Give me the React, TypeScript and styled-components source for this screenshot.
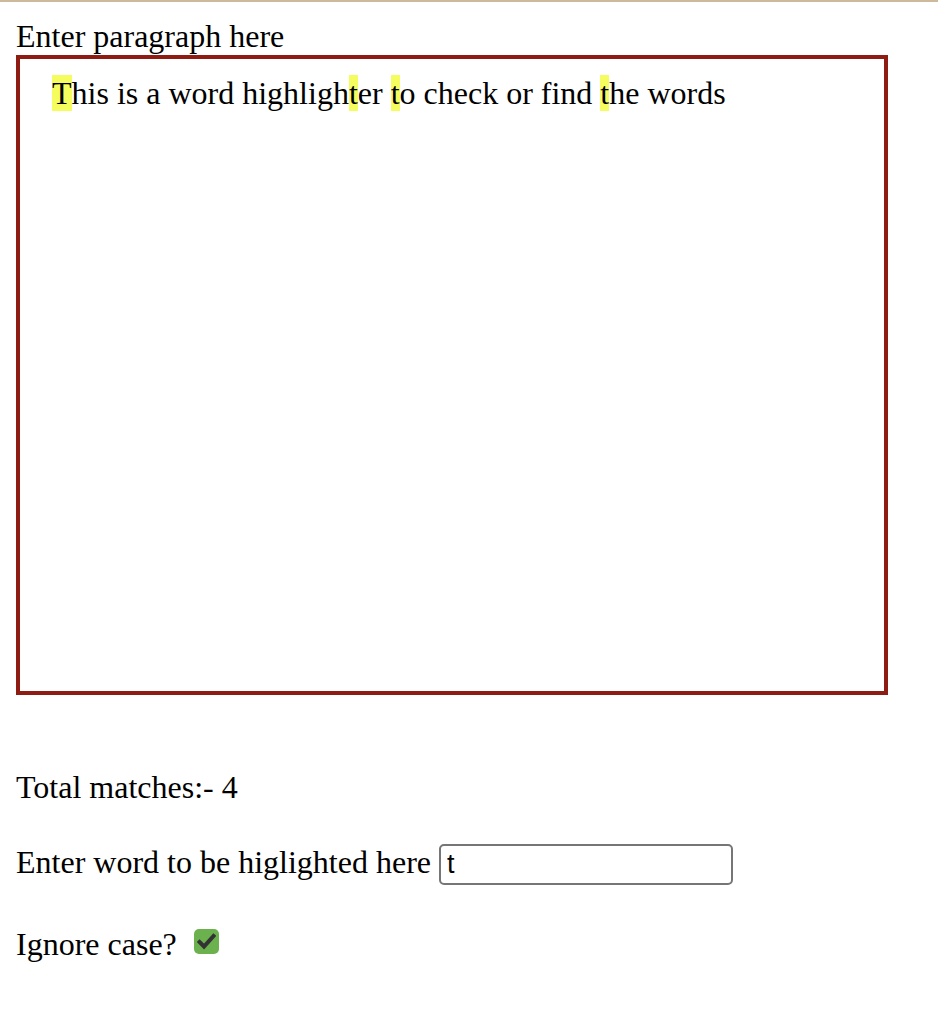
import React from "react";
import styled, { createGlobalStyle } from "styled-components";

const Global = createGlobalStyle`
  html {
    border-top: 2px solid #cdb99c;
    background: #ffffff;
  }
  body {
    margin: 16px;
    font-family: "Liberation Serif", "Times New Roman", serif;
    font-size: 32px;
    color: #000000;
  }
`;

const Page = styled.div`
  display: flex;
  flex-direction: column;
  align-items: flex-start;
`;

const Label = styled.div`
  line-height: normal;
`;

const Editor = styled.div`
  box-sizing: border-box;
  width: 872px;
  height: 640px;
  border: 4px solid #8e1c12;
  padding: 16px 32px;
  line-height: normal;
  outline: none;
`;

const Mark = styled.span`
  background: #f5fd5e;
`;

const Row = styled.div<{ $top: number }>`
  margin-top: ${(p) => p.$top}px;
  line-height: normal;
  display: block;
`;

const WordInput = styled.input`
  box-sizing: border-box;
  width: 294px;
  height: 41px;
  margin: 0;
  padding: 0 6px;
  border: 2px solid #767676;
  border-radius: 5px;
  font-family: "Liberation Sans", Arial, sans-serif;
  font-size: 27px;
  color: #000;
  vertical-align: baseline;
  outline: none;
`;

const CheckLabel = styled.label`
  display: inline-block;
  position: relative;
  width: 25px;
  height: 25px;
  margin-left: 17px;
  vertical-align: 5px;
`;

const HiddenBox = styled.input`
  position: absolute;
  opacity: 0;
  inset: 0;
  margin: 0;
`;

const Box = styled.span`
  display: flex;
  align-items: center;
  justify-content: center;
  width: 25px;
  height: 25px;
  border-radius: 5px;
  background: #6bb24f;
`;

export default function App() {
  const [word, setWord] = React.useState("t");
  const [ignore, setIgnore] = React.useState(true);
  return (
    <Page>
      <Global />
      <Label>Enter paragraph here</Label>
      <Editor>
        <Mark>T</Mark>his is a word highligh<Mark>t</Mark>er <Mark>t</Mark>o check or find <Mark>t</Mark>he words
      </Editor>
      <Row $top={74}>Total matches:- 4</Row>
      <Row $top={38}>
        Enter word to be higlighted here{" "}
        <WordInput value={word} onChange={(e) => setWord(e.target.value)} />
      </Row>
      <Row $top={41}>
        Ignore case?
        <CheckLabel>
          <HiddenBox type="checkbox" checked={ignore} onChange={(e) => setIgnore(e.target.checked)} />
          <Box>
            <svg width="19" height="17" viewBox="0 0 19 17">
              <path d="M2.5 9 L7 13.5 L16.5 3" fill="none" stroke="#333333" strokeWidth="4" strokeLinecap="square" strokeLinejoin="miter" />
            </svg>
          </Box>
        </CheckLabel>
      </Row>
    </Page>
  );
}
